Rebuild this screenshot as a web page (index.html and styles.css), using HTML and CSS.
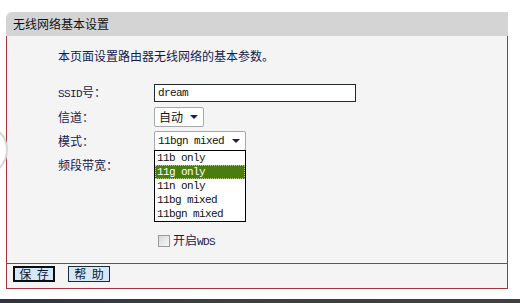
FILE: index.html
```html
<!DOCTYPE html>
<html lang="zh-CN">
<head>
    <meta charset="UTF-8">
    <title>无线网络基本设置</title>
    <link rel="stylesheet" href="styles.css">
</head>
<body>
    <span class="bg-ring"></span>
    <div class="panel">
        <div class="panel-head">无线网络基本设置</div>
        <div class="panel-body">
            <div class="content">
                <p class="intro">本页面设置路由器无线网络的基本参数。</p>
                <div class="form-grid">
                    <span class="label"><span class="en">SSID</span>号<span class="colon">：</span></span>
                    <div class="text-input en">dream</div>

                    <span class="label">信道<span class="colon">：</span></span>
                    <div class="select channel"><span>自动</span><i class="arrow"></i></div>

                    <span class="label">模式<span class="colon">：</span></span>
                    <div class="select mode">
                        <span class="en">11bgn mixed</span><i class="arrow"></i>
                        <ul class="dropdown en">
                            <li>11b only</li>
                            <li class="active">11g only</li>
                            <li>11n only</li>
                            <li>11bg mixed</li>
                            <li>11bgn mixed</li>
                        </ul>
                    </div>

                    <span class="label">频段带宽<span class="colon">：</span></span>
                    <div></div>
                </div>
                <div class="wds-row">
                    <span class="checkbox"></span>
                    <span>开启<span class="en">WDS</span></span>
                </div>
            </div>
            <div class="buttons">
                <button class="btn default">保 存</button>
                <button class="btn">帮 助</button>
            </div>
        </div>
    </div>
    <div class="taskbar"></div>
</body>
</html>
```
FILE: styles.css
```css
body {
    margin: 0;
    padding: 12px 0 0 6px;
    height: 303px;
    box-sizing: border-box;
    overflow: hidden;
    position: relative;
    background: #fff;
    font-family: "Noto Sans CJK SC", sans-serif;
    font-size: 12px;
    line-height: 16px;
    color: #141a4e;
}
.en {
    font-family: "Liberation Mono", monospace;
    font-size: 11px;
    letter-spacing: -0.6px;
}
.colon {
    font-family: "Noto Sans CJK TC", sans-serif;
}
.bg-ring {
    position: absolute;
    left: -44px;
    top: 124px;
    width: 48px;
    height: 48px;
    border: 2px solid #d6d6d6;
    border-radius: 50%;
}
.panel {
    width: 502px;
}
.panel-head {
    height: 24px;
    line-height: 24px;
    padding-left: 7px;
    background: #d4d4d4;
    border-top-left-radius: 6px;
    color: #111;
}
.panel-body {
    background: #f4f4f4;
    border: 1px solid #a83638;
    border-top: none;
}
.content {
    height: 227px;
    padding: 12px 0 0 51px;
    box-sizing: border-box;
}
.intro {
    margin: 0 0 17px;
}
.form-grid {
    display: grid;
    grid-template-columns: 96px 1fr;
    grid-auto-rows: 24px;
    align-items: center;
}
.text-input {
    width: 202px;
    height: 18px;
    box-sizing: border-box;
    border: 1px solid #1e2a2a;
    background: #fff;
    padding: 0 3px;
    line-height: 16px;
    color: #111;
}
.select {
    position: relative;
    height: 20px;
    box-sizing: border-box;
    border: 1px solid #a4a8b0;
    border-radius: 2px;
    background: #fff;
    display: flex;
    align-items: center;
    justify-content: space-between;
    padding: 0 5px 0 4px;
    color: #111;
}
.channel {
    width: 50px;
}
.mode {
    width: 92px;
    padding-left: 3px;
}
.arrow {
    width: 0;
    height: 0;
    border-left: 4px solid transparent;
    border-right: 4px solid transparent;
    border-top: 4px solid #1a1f5c;
}
.dropdown {
    position: absolute;
    left: -1px;
    top: 18px;
    width: 92px;
    margin: 0;
    padding: 0;
    list-style: none;
    background: #fff;
    border: 1px solid #000;
    box-sizing: border-box;
    color: #111;
}
.dropdown li {
    height: 14px;
    line-height: 14px;
    padding-left: 2px;
}
.dropdown .active {
    background: #4a7c0e;
    color: #fff;
    outline: 1px dotted #b8d480;
    outline-offset: -1px;
}
.wds-row {
    margin: 55px 0 0 100px;
    display: flex;
    align-items: center;
    gap: 3px;
}
.checkbox {
    width: 12px;
    height: 12px;
    box-sizing: border-box;
    border: 1px solid #9a9a9a;
    background: linear-gradient(135deg, #d8d8d8, #f8f8f8);
}
.buttons {
    height: 25px;
    box-sizing: border-box;
    border-top: 1px solid #a83638;
    padding: 2px 6px 0;
    display: flex;
    gap: 13px;
}
.btn {
    width: 42px;
    height: 16px;
    padding: 0;
    border: 1px solid #1c2836;
    background: #d6e8f8;
    font-family: "Noto Sans CJK SC", sans-serif;
    font-size: 12px;
    line-height: 12px;
    word-spacing: 3px;
    color: #101830;
}
.btn.default {
    border: 2px solid #0a0e12;
}
.taskbar {
    position: absolute;
    left: 0;
    right: 0;
    bottom: 0;
    height: 4px;
    background: linear-gradient(90deg, #2e3440, #3e3e3e 40%, #404040);
}
```
